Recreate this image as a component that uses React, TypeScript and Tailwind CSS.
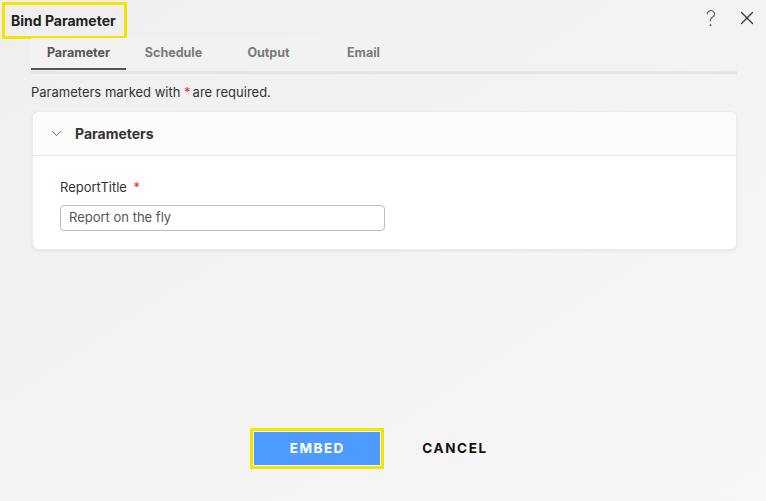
import { ChevronDown, X } from 'lucide-react'

const tabs = ['Parameter', 'Schedule', 'Output', 'Email']

export default function App() {
  const active = 'Parameter'

  return (
    <div
      className="w-[766px] h-[501px] bg-gradient-to-br from-[#efefef] to-[#f7f7f7] flex flex-col text-[#333]"
      style={{ fontFamily: 'Inter, "Noto Sans", sans-serif' }}>
      {/* Title bar */}
      <div className="flex items-start justify-between h-[36px]">
        <div className="ml-[2px] mt-[2px] w-[125px] h-[37px] border-[3px] border-[#f5e400] flex items-center pl-[6px]">
          <span className="text-[14px] font-bold text-[#222]">Bind Parameter</span>
        </div>
        <div className="flex items-center gap-[20px] mr-[8px] mt-[7px] text-[#333]">
          <span className="text-[21px] font-extralight leading-none">?</span>
          <X className="w-[22px] h-[22px]" strokeWidth={1.3} />
        </div>
      </div>

      {/* Tabs */}
      <div className="mx-[31px] mt-[2px]">
        <div className="flex w-[380px] bg-[#f2f2f2]">
          {tabs.map((tab) => (
            <div
              key={tab}
              className={`w-[95px] h-[32px] flex items-center justify-center text-[12.5px] font-bold ${
                tab === active ? 'text-[#555] border-b-2 border-[#555]' : 'text-[#7a7a7a] border-b-2 border-transparent'
              }`}>
              {tab}
            </div>
          ))}
        </div>
        <div className="h-[3px] mt-[1px] bg-[#e4e4e4] w-[706px]" />
      </div>

      <p className="mx-[31px] mt-[9px] text-[13px] text-[#333]">
        Parameters marked with <span className="text-[#e03131] mr-[2px]">*</span>are required.
      </p>

      {/* Parameters card */}
      <div className="ml-[32px] mr-[29px] mt-[8px] bg-white rounded-[7px] shadow-[0_1px_3px_rgba(0,0,0,0.08)] border border-[#ececec]">
        <div className="h-[44px] flex items-center gap-[10px] pl-[15px] bg-[#fbfbfb] border-b border-[#e6e6e6] rounded-t-[7px]">
          <ChevronDown className="w-[17px] h-[17px] text-[#555]" strokeWidth={1.3} />
          <span className="text-[14px] font-bold text-[#333]">Parameters</span>
        </div>
        <div className="px-[27px] pt-[22px] pb-[18px]">
          <div className="text-[13px] text-[#333]">
            ReportTitle <span className="text-[#e03131] ml-[3px]">*</span>
          </div>
          <div className="mt-[8px] w-[325px] h-[26px] border border-[#bdbdbd] rounded-[4px] flex items-center pl-[8px] text-[13px] text-[#555]">
            Report on the fly
          </div>
        </div>
      </div>

      {/* Actions */}
      <div className="mt-auto mb-[32px] flex items-center justify-center gap-[38px] pr-[28px]">
        <div className="border-[3px] border-[#f5e400] w-[134px] h-[41px] p-[1px]">
          <button className="w-full h-full bg-[#4d9bff] text-white text-[13.5px] font-bold tracking-[1.5px]">
            EMBED
          </button>
        </div>
        <button className="text-[13.5px] font-bold tracking-[1.6px] text-[#111]">CANCEL</button>
      </div>
    </div>
  )
}
